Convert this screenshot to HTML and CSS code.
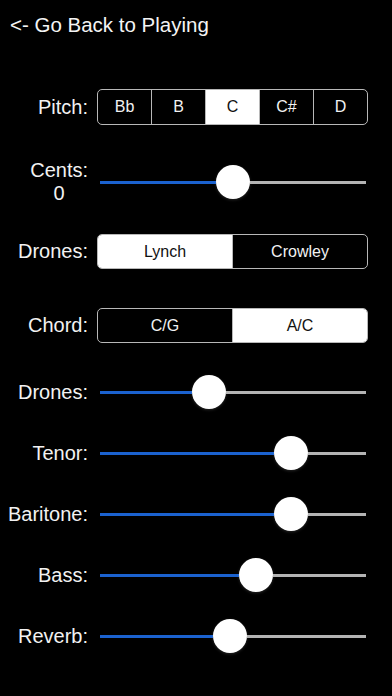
FILE: index.html
```html
<!DOCTYPE html>
<html>
<head>
<meta charset="utf-8">
<link rel="stylesheet" href="styles.css">
</head>
<body>
<div class="screen">
  <div class="title">&lt;- Go Back to Playing</div>

  <div class="row row-pitch">
    <div class="label">Pitch:</div>
    <div class="seg seg-pitch">
      <div class="seg-item">Bb</div>
      <div class="seg-item">B</div>
      <div class="seg-item on">C</div>
      <div class="seg-item">C#</div>
      <div class="seg-item">D</div>
    </div>
  </div>

  <div class="row row-cents">
    <div class="label label-two"><div class="stack"><span>Cents:</span><span>0</span></div></div>
    <div class="slider">
      <div class="fill" style="width:116px"></div>
      <div class="thumb"></div>
      <div class="rest"></div>
    </div>
  </div>

  <div class="row row-drones">
    <div class="label">Drones:</div>
    <div class="seg">
      <div class="seg-item on">Lynch</div>
      <div class="seg-item">Crowley</div>
    </div>
  </div>

  <div class="row row-chord">
    <div class="label">Chord:</div>
    <div class="seg">
      <div class="seg-item">C/G</div>
      <div class="seg-item on">A/C</div>
    </div>
  </div>

  <div class="row row-s1">
    <div class="label">Drones:</div>
    <div class="slider">
      <div class="fill" style="width:92px"></div>
      <div class="thumb"></div>
      <div class="rest"></div>
    </div>
  </div>

  <div class="row row-s">
    <div class="label">Tenor:</div>
    <div class="slider">
      <div class="fill" style="width:174px"></div>
      <div class="thumb"></div>
      <div class="rest"></div>
    </div>
  </div>

  <div class="row row-s">
    <div class="label">Baritone:</div>
    <div class="slider">
      <div class="fill" style="width:174px"></div>
      <div class="thumb"></div>
      <div class="rest"></div>
    </div>
  </div>

  <div class="row row-s">
    <div class="label">Bass:</div>
    <div class="slider">
      <div class="fill" style="width:139px"></div>
      <div class="thumb"></div>
      <div class="rest"></div>
    </div>
  </div>

  <div class="row row-s">
    <div class="label">Reverb:</div>
    <div class="slider">
      <div class="fill" style="width:113px"></div>
      <div class="thumb"></div>
      <div class="rest"></div>
    </div>
  </div>
</div>
</body>
</html>
```

FILE: styles.css
```css
html, body {
  margin: 0;
  padding: 0;
  background: #000;
}
body {
  font-family: "Liberation Sans", Arial, sans-serif;
  color: #f2f2f2;
}
.screen {
  width: 392px;
  height: 696px;
  display: flex;
  flex-direction: column;
  overflow: hidden;
}
.title {
  height: 50px;
  line-height: 50px;
  padding-left: 10px;
  font-size: 20.5px;
  color: #f4f4f4;
}
.row {
  display: flex;
  align-items: center;
  gap: 9px;
}
.label {
  width: 88px;
  text-align: right;
  font-size: 20px;
  color: #f2f2f2;
  flex-shrink: 0;
}
.label-two {
  display: flex;
  justify-content: flex-end;
}
.stack {
  display: flex;
  flex-direction: column;
  align-items: center;
  line-height: 23px;
}
.row-pitch { margin-top: 39px; height: 36px; }
.row-cents { margin-top: 34px; height: 46px; }
.row-drones { margin-top: 29px; height: 35px; }
.row-chord { margin-top: 39px; height: 35px; }
.row-s1 { margin-top: 32px; height: 34px; }
.row-s { margin-top: 27px; height: 34px; }

.seg {
  width: 271px;
  height: 100%;
  box-sizing: border-box;
  border: 1px solid #b8b8b8;
  border-radius: 5px;
  display: flex;
  overflow: hidden;
}
.seg-item {
  flex: 1;
  display: flex;
  align-items: center;
  justify-content: center;
  font-size: 16px;
  color: #f2f2f2;
  border-left: 1px solid #b8b8b8;
}
.seg-item:first-child {
  border-left: none;
}
.seg-item.on {
  background: #fff;
  color: #111;
}

.slider {
  width: 266px;
  margin-left: 3px;
  height: 34px;
  display: flex;
  align-items: center;
}
.fill {
  height: 3px;
  background: #1b62cf;
  flex-shrink: 0;
}
.thumb {
  width: 34px;
  height: 34px;
  border-radius: 50%;
  background: #fff;
  flex-shrink: 0;
  box-shadow: 0 1px 3px rgba(255,255,255,0.15);
}
.rest {
  flex: 1;
  height: 3px;
  background: #b3b3b3;
}
```
